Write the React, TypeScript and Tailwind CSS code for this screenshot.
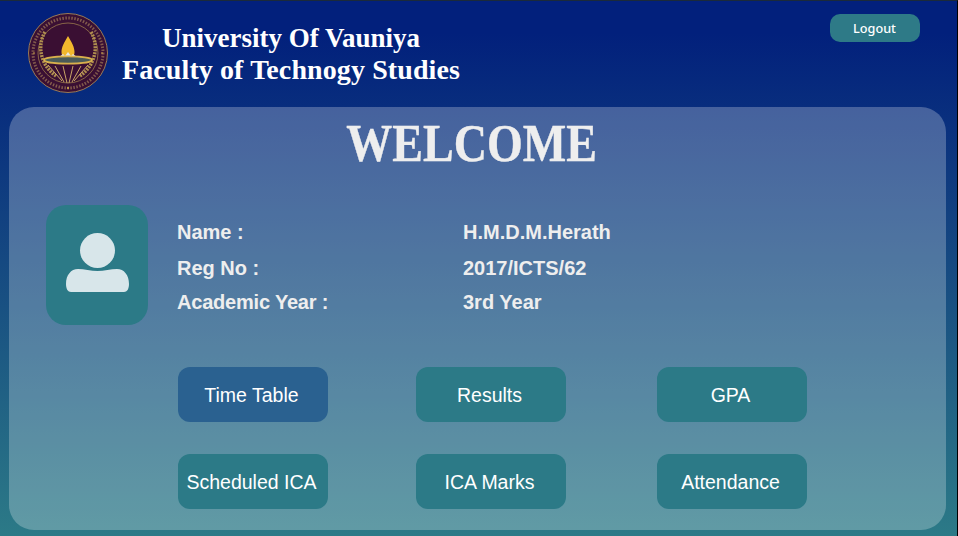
export default function App() {
  const serif = "font-['Liberation_Serif',serif]";
  const sans = "font-['Liberation_Sans',Arial,sans-serif]";
  const info = [
    ["Name :", "H.M.D.M.Herath", "h-[36px]", ""],
    ["Reg No :", "2017/ICTS/62", "h-[36px]", ""],
    ["Academic Year :", "3rd Year", "h-[32px]", "tracking-[-0.2px]"],
  ];
  const rows = [
    ["Time Table", "Results", "GPA"],
    ["Scheduled ICA", "ICA Marks", "Attendance"],
  ];
  return (
    <div className="w-[958px] h-[536px] overflow-hidden flex flex-col border-t border-r border-t-[#1b2a3a] border-r-black bg-linear-to-b/srgb from-[#02207c] from-[6%] to-[#2c7a87]">
      <header className="h-[106px] shrink-0 flex items-start">
        <svg className="mt-[12px] ml-[28px] shrink-0" width="80" height="80" viewBox="0 0 80 80">
          <circle cx="40" cy="40" r="39.5" fill="#3a0f33" stroke="#9a7a55" strokeWidth="1" />
          <circle cx="40" cy="40" r="35" fill="none" stroke="#c9a566" strokeWidth="3" strokeDasharray="1.5 1.5" opacity="0.5" />
          <circle cx="40" cy="40" r="30" fill="none" stroke="#a98a50" strokeWidth="0.7" />
          <path d="M17 19 C9 32 12 52 28 63 M63 19 C71 32 68 52 52 63" fill="none" stroke="#b08f4f" strokeWidth="3.5" strokeDasharray="2 1" />
          <path d="M40 23 C36 30 33.5 34 33.5 39 C33.5 43 36 45 40 45 C44 45 46.5 43 46.5 39 C46.5 34 44 30 40 23 Z" fill="#f2b82d" />
          <path d="M31 44 L35 41 L37 43 L40 39 L43 43 L45 41 L49 44 L46 49 L34 49 Z" fill="#e8e8e4" />
          <ellipse cx="40" cy="47" rx="24" ry="3.6" fill="#4a5a58" stroke="#d9b04c" strokeWidth="1.8" />
          <path d="M20 52 L34 68 M27 53 L36 69 M35 53 L39 70 M45 53 L41 70 M53 53 L44 69 M60 52 L46 68" fill="none" stroke="#c9a566" strokeWidth="1" />
          <circle cx="40" cy="75" r="1" fill="#d9b04c" />
          <circle cx="6" cy="40" r="0.8" fill="#d9b04c" />
          <circle cx="74" cy="40" r="0.8" fill="#d9b04c" />
        </svg>
        <div className={`${serif} w-[366px] mt-[21px] text-center text-white font-bold text-[27px] leading-[32px]`}>
          <div>University Of Vauniya</div>
          <div className="text-[28px] tracking-[0.1px]">Faculty of Technogy Studies</div>
        </div>
        <button className="ml-[356px] mt-[13px] w-[90px] h-[28px] pt-[2px] pr-[1px] rounded-[10px] bg-[#2e7a87] text-white text-[12.7px] font-['Noto_Sans',sans-serif] font-medium">
          Logout
        </button>
      </header>
      <main className="mx-[9px] w-[937px] h-[423px] rounded-[25px] bg-white/25 flex flex-col">
        <h1 className={`${serif} text-center text-[#eeeeee] font-bold text-[52px] leading-[72px] mt-[1px] pr-[11px] [-webkit-text-stroke:0.4px_#eeeeee]`}>
          <span className="inline-block scale-x-[0.886]">WELCOME</span>
        </h1>
        <section className="flex mt-[25px] ml-[37px]">
          <div className="w-[102px] h-[120px] rounded-[20px] bg-[#2c7a87] flex items-start justify-center shrink-0">
            <svg className="mt-[28px]" width="63" height="59" viewBox="0 0 63 59" fill="#d8e6ea">
              <circle cx="31.5" cy="17.5" r="17.5" />
              <path d="M12 36 C18 36 25 38 31.5 38 C38 38 45 36 51 36 C58 36 63 42 63 51 C63 56 61 59 58 59 L5 59 C2 59 0 56 0 51 C0 42 5 36 12 36 Z" />
            </svg>
          </div>
          <div className={`${sans} ml-[29px] mt-[9px] flex flex-col text-[#eeeeee] font-bold text-[20px]`}>
            {info.map(([k, v, h, t]) => (
              <div key={k} className={`flex items-center ${h}`}>
                <span className={`w-[286px] ${t}`}>{k}</span>
                <span>{v}</span>
              </div>
            ))}
          </div>
        </section>
        <section className={`${sans} ml-[169px] mt-[42px] flex flex-col gap-[32px]`}>
          {rows.map((r, i) => (
            <div key={i} className="flex">
              {r.map((t, j) => (
                <button
                  key={t}
                  className={`w-[150px] h-[55px] pt-[2px] pr-[3px] rounded-[12px] text-white text-[19.5px] ${t === "Time Table" ? "bg-[#2a6190]" : "bg-[#2c7a87]"} ${j === 1 ? "ml-[88px]" : j === 2 ? "ml-[91px]" : ""}`}
                >
                  {t}
                </button>
              ))}
            </div>
          ))}
        </section>
      </main>
    </div>
  );
}
